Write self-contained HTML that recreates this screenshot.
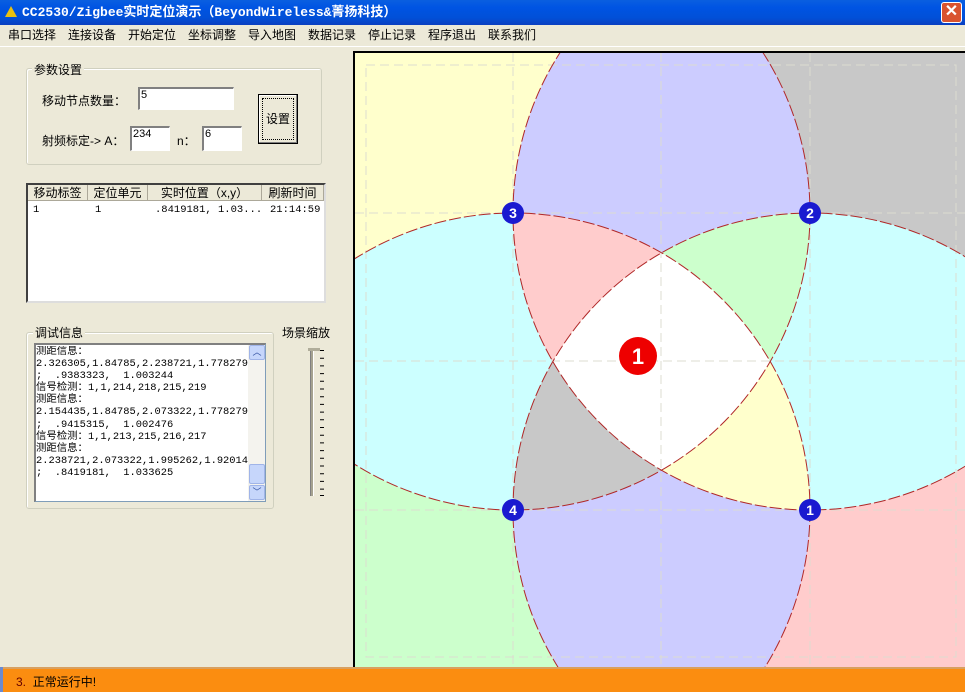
<!DOCTYPE html>
<html><head><meta charset="utf-8"><style>
*{margin:0;padding:0;box-sizing:border-box}
html,body{overflow:hidden}
body{width:965px;height:692px;background:#ece9d8;position:relative;font-family:"Liberation Sans","Noto Sans CJK SC","WenQuanYi Zen Hei",sans-serif;font-size:12px;color:#000}
.a{position:absolute}
#title{left:0;top:0;width:965px;height:25px;background:linear-gradient(#0a5fe0,#0054e3 30%,#0150d8 70%,#0a3fc0);color:#fff;font-weight:bold;font-size:13px;line-height:25px;padding-left:22px;font-family:"Liberation Mono","Noto Sans CJK SC",monospace}
#close{right:3px;top:2px;width:21px;height:21px;background:#d9532f;border:1px solid #fff;border-radius:3px;color:#fff;font-size:16px;line-height:18px;text-align:center;font-weight:bold}
#menu{left:0;top:25px;width:965px;height:20px;line-height:20px;font-size:12px}
#menu span{position:absolute;top:0}
.grp{border:1px solid #d0d0bf;border-radius:3px;box-shadow:inset 1px 1px 0 #fff}
.lbl{background:#ece9d8;padding:0 2px}
.in{background:#fff;border-top:2px solid #808080;border-left:2px solid #808080;border-right:1px solid #fff;border-bottom:1px solid #fff;font-size:11px;padding-left:1px;line-height:13px}
.list{background:#fff;border:2px solid #404040;border-right-color:#ddd;border-bottom-color:#ddd}
.hd{background:#ece9d8;border-right:1px solid #aca899;border-bottom:1px solid #aca899;height:16px;line-height:16px;text-align:center;top:0}
.mono{font-family:"Liberation Mono","Noto Sans CJK SC",monospace}
</style></head><body>
<div id="title" class="a">CC2530/Zigbee实时定位演示（BeyondWireless&amp;菁扬科技）</div>
<div class="a" style="left:5px;top:6px;width:0;height:0;border-left:6px solid transparent;border-right:6px solid transparent;border-bottom:11px solid #e8c010"></div>
<div id="close" class="a">✕</div>
<div id="menu" class="a"><span style="left:8px">串口选择</span><span style="left:68px">连接设备</span><span style="left:128px">开始定位</span><span style="left:188px">坐标调整</span><span style="left:248px">导入地图</span><span style="left:308px">数据记录</span><span style="left:368px">停止记录</span><span style="left:428px">程序退出</span><span style="left:488px">联系我们</span></div>
<div class="a" style="left:0;top:46px;width:965px;height:1px;background:#fff"></div>

<div class="a grp" style="left:26px;top:68px;width:296px;height:97px"></div>
<div class="a lbl" style="left:32px;top:61px">参数设置</div>
<div class="a" style="left:42px;top:92px">移动节点数量：</div>
<div class="a in" style="left:138px;top:87px;width:96px;height:23px">5</div>
<div class="a" style="left:42px;top:132px">射频标定-&gt; A：</div>
<div class="a in" style="left:130px;top:126px;width:40px;height:25px">234</div>
<div class="a" style="left:177px;top:132px">n：</div>
<div class="a in" style="left:202px;top:126px;width:40px;height:25px">6</div>
<div class="a" style="left:258px;top:94px;width:40px;height:50px;border:1px solid #000;background:#ece9d8;box-shadow:inset -1px -1px 0 #808080,inset 1px 1px 0 #fff"><div style="margin:3px;border:1px dotted #000;height:42px;line-height:40px;text-align:center">设置</div></div>

<div class="a list" style="left:26px;top:183px;width:300px;height:120px">
<div class="a hd" style="left:0;width:60px">移动标签</div>
<div class="a hd" style="left:60px;width:60px">定位单元</div>
<div class="a hd" style="left:120px;width:114px">实时位置（x,y）</div>
<div class="a hd" style="left:234px;width:62px">刷新时间</div>
<div class="a mono" style="left:5px;top:19px;font-size:10.5px">1</div>
<div class="a mono" style="left:67px;top:19px;font-size:10.5px">1</div>
<div class="a mono" style="left:127px;top:19px;font-size:10.5px">.8419181, 1.03...</div>
<div class="a mono" style="left:242px;top:19px;font-size:10.5px">21:14:59</div>
</div>

<div class="a grp" style="left:26px;top:332px;width:248px;height:177px"></div>
<div class="a lbl" style="left:33px;top:324px">调试信息</div>
<div class="a" style="left:34px;top:343px;width:232px;height:159px;background:#fff;border:1px solid #7f9db9;border-top:2px solid #808080;border-left:2px solid #808080"></div>
<div class="a mono" style="left:36px;top:346px;width:213px;height:140px;overflow:hidden;font-size:10.4px;line-height:12.1px;white-space:pre">测距信息：
2.326305,1.84785,2.238721,1.778279
;  .9383323,  1.003244
信号检测：1,1,214,218,215,219
测距信息：
2.154435,1.84785,2.073322,1.778279
;  .9415315,  1.002476
信号检测：1,1,213,215,216,217
测距信息：
2.238721,2.073322,1.995262,1.920142
;  .8419181,  1.033625</div>
<div class="a" style="left:248px;top:345px;width:17px;height:156px;background:#f4f3ee"></div>
<div class="a" style="left:249px;top:345px;width:16px;height:15px;background:#c6d6fb;border:1px solid #a0b4e8;border-radius:2px;color:#3050a0;font-size:9px;text-align:center;line-height:13px">︿</div>
<div class="a" style="left:249px;top:464px;width:16px;height:20px;background:#c6d6fb;border:1px solid #a0b4e8;border-radius:2px"></div>
<div class="a" style="left:249px;top:485px;width:16px;height:15px;background:#c6d6fb;border:1px solid #a0b4e8;border-radius:2px;color:#3050a0;font-size:9px;text-align:center;line-height:13px">﹀</div>

<div class="a" style="left:282px;top:324px">场景缩放</div>
<div class="a" style="left:310px;top:348px;width:4px;height:148px;background:#a5a290;border-left:1px solid #808080;border-right:1px solid #fff"></div>
<div class="a" style="left:308px;top:348px;width:12px;height:3px;background:#b0ad9a"></div>
<svg class="a" style="left:320px;top:348px" width="6" height="150">
<g stroke="#000" stroke-width="1">
<path d="M0 2.5h4M0 10.2h4M0 17.9h4M0 25.6h4M0 33.3h4M0 41h4M0 48.7h4M0 56.4h4M0 64.1h4M0 71.8h4M0 79.5h4M0 87.2h4M0 94.9h4M0 102.6h4M0 110.3h4M0 118h4M0 125.7h4M0 133.4h4M0 141.1h4M0 147.5h4"/></g></svg>

<svg class="a" style="left:353px;top:51px" width="612" height="616" viewBox="353 51 612 616">
<defs>
<clipPath id="cv"><rect x="355" y="53" width="610" height="614"/></clipPath>
<clipPath id="c3"><circle cx="513" cy="213" r="297"/></clipPath>
<clipPath id="c2"><circle cx="810" cy="213" r="297"/></clipPath>
<clipPath id="c4"><circle cx="513" cy="510" r="297"/></clipPath>
<clipPath id="c1"><circle cx="810" cy="510" r="297"/></clipPath>
</defs>
<rect x="353" y="51" width="612" height="616" fill="#000"/>
<g clip-path="url(#cv)">
<rect x="355" y="53" width="306" height="308" fill="#ffffcc"/>
<rect x="661" y="53" width="304" height="308" fill="#c8c8c8"/>
<rect x="355" y="361" width="306" height="306" fill="#ccffcc"/>
<rect x="661" y="361" width="304" height="306" fill="#ffcccc"/>
<g clip-path="url(#c3)"><circle cx="810" cy="213" r="297" fill="#ccccff"/></g>
<g clip-path="url(#c4)"><circle cx="810" cy="510" r="297" fill="#ccccff"/></g>
<g clip-path="url(#c3)"><circle cx="513" cy="510" r="297" fill="#ccffff"/></g>
<g clip-path="url(#c2)"><circle cx="810" cy="510" r="297" fill="#ccffff"/></g>
<g clip-path="url(#c3)"><g clip-path="url(#c2)"><circle cx="513" cy="510" r="297" fill="#ffcccc"/></g></g>
<g clip-path="url(#c3)"><g clip-path="url(#c2)"><circle cx="810" cy="510" r="297" fill="#ccffcc"/></g></g>
<g clip-path="url(#c3)"><g clip-path="url(#c4)"><circle cx="810" cy="510" r="297" fill="#c8c8c8"/></g></g>
<g clip-path="url(#c2)"><g clip-path="url(#c4)"><circle cx="810" cy="510" r="297" fill="#ffffcc"/></g></g>
<g clip-path="url(#c3)"><g clip-path="url(#c2)"><g clip-path="url(#c4)"><circle cx="810" cy="510" r="297" fill="#fff"/></g></g></g>
<g stroke="#dcdcd0" stroke-width="1" stroke-dasharray="9,5" fill="none">
<rect x="366" y="65" width="590" height="592"/>
<path d="M513 53V667M661 53V667M810 53V667M355 213H965M355 361H965M355 510H965"/>
</g>
<g stroke="#b02828" stroke-width="1" stroke-dasharray="12,3" fill="none">
<circle cx="513" cy="213" r="297"/><circle cx="810" cy="213" r="297"/>
<circle cx="513" cy="510" r="297"/><circle cx="810" cy="510" r="297"/>
</g>
<g font-family="Liberation Sans,sans-serif" font-size="14" font-weight="bold" fill="#fff" text-anchor="middle">
<circle cx="513" cy="213" r="11" fill="#1a1ad0"/><text x="513" y="218">3</text>
<circle cx="810" cy="213" r="11" fill="#1a1ad0"/><text x="810" y="218">2</text>
<circle cx="513" cy="510" r="11" fill="#1a1ad0"/><text x="513" y="515">4</text>
<circle cx="810" cy="510" r="11" fill="#1a1ad0"/><text x="810" y="515">1</text>
<circle cx="638" cy="356" r="19" fill="#ee0000"/><text x="638" y="364" font-size="22">1</text>
</g>
</g>
</svg>

<div class="a" style="left:0;top:667px;width:965px;height:25px;background:#fb8d10;border-top:2px solid #d8a060"></div>
<div class="a" style="left:0;top:667px;width:3px;height:25px;background:#6a8ad0"></div>
<div class="a" style="left:16px;top:673px;color:#600;font-size:12px">3.&nbsp;&nbsp;<span style="color:#000">正常运行中!</span></div>
</body></html>
